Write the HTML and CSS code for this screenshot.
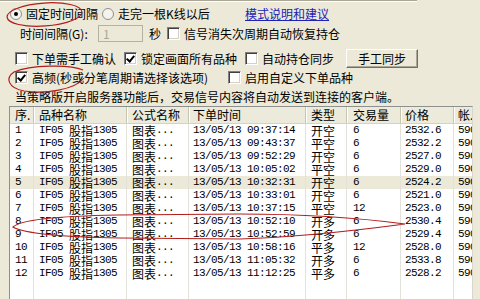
FILE: index.html
```html
<!DOCTYPE html>
<html>
<head>
<meta charset="utf-8">
<link rel="stylesheet" href="styles.css">
</head>
<body>
<div class="toprule"></div>
<div class="row r1">
  <span class="radio on"></span><span class="lbl w72">固定时间间隔</span>
  <span class="radio"></span><span class="lbl w90">走完一根K线以后</span>
  <a class="link">模式说明和建议</a>
</div>
<div class="row r2">
  <span class="lbl w70">时间间隔(G):</span>
  <span class="tbox">1</span>
  <span class="lbl sec">秒</span>
  <span class="cb"></span><span class="lbl">信号消失次周期自动恢复持仓</span>
</div>
<div class="row r3">
  <span class="cb"></span><span class="lbl w84">下单需手工确认</span>
  <span class="cb on g8"></span><span class="lbl w96">锁定画面所有品种</span>
  <span class="cb g8"></span><span class="lbl w72">自动持仓同步</span>
  <span class="btn">手工同步</span>
</div>
<div class="row r4">
  <span class="cb on"></span><span class="lbl w190">高频(秒或分笔周期请选择该选项)</span>
  <span class="cb"></span><span class="lbl">启用自定义下单品种</span>
</div>
<div class="row r5">
  <span class="lbl">当策略版开启服务器功能后，交易信号内容将自动发送到连接的客户端。</span>
</div>
<div class="list">
  <div class="tr th">
    <span>序.</span><span>品种名称</span><span>公式名称</span><span>下单时间</span><span>类型</span><span>交易量</span><span>价格</span><span>帐.</span>
  </div>
  <div class="tr"><span>1</span><span>IF05 <i>股指</i>1305</span><span><i>图表</i>...</span><span>13/05/13 09:37:14</span><span class="k">开空</span><span>6</span><span>2532.6</span><span>590</span></div>
  <div class="tr"><span>2</span><span>IF05 <i>股指</i>1305</span><span><i>图表</i>...</span><span>13/05/13 09:43:37</span><span class="k">平空</span><span>6</span><span>2532.2</span><span>590</span></div>
  <div class="tr"><span>3</span><span>IF05 <i>股指</i>1305</span><span><i>图表</i>...</span><span>13/05/13 09:52:29</span><span class="k">开空</span><span>6</span><span>2527.0</span><span>590</span></div>
  <div class="tr"><span>4</span><span>IF05 <i>股指</i>1305</span><span><i>图表</i>...</span><span>13/05/13 10:05:02</span><span class="k">平空</span><span>6</span><span>2529.0</span><span>590</span></div>
  <div class="tr sel"><span>5</span><span>IF05 <i>股指</i>1305</span><span><i>图表</i>...</span><span>13/05/13 10:32:31</span><span class="k">开空</span><span>6</span><span>2524.2</span><span>590</span></div>
  <div class="tr"><span>6</span><span>IF05 <i>股指</i>1305</span><span><i>图表</i>...</span><span>13/05/13 10:33:01</span><span class="k">开空</span><span>6</span><span>2521.0</span><span>590</span></div>
  <div class="tr"><span>7</span><span>IF05 <i>股指</i>1305</span><span><i>图表</i>...</span><span>13/05/13 10:37:15</span><span class="k">平空</span><span>12</span><span>2523.0</span><span>590</span></div>
  <div class="tr"><span>8</span><span>IF05 <i>股指</i>1305</span><span><i>图表</i>...</span><span>13/05/13 10:52:10</span><span class="k">开多</span><span>6</span><span>2530.4</span><span>590</span></div>
  <div class="tr"><span>9</span><span>IF05 <i>股指</i>1305</span><span><i>图表</i>...</span><span>13/05/13 10:52:59</span><span class="k">开多</span><span>6</span><span>2529.4</span><span>590</span></div>
  <div class="tr"><span>10</span><span>IF05 <i>股指</i>1305</span><span><i>图表</i>...</span><span>13/05/13 10:58:16</span><span class="k">平多</span><span>12</span><span>2528.0</span><span>590</span></div>
  <div class="tr"><span>11</span><span>IF05 <i>股指</i>1305</span><span><i>图表</i>...</span><span>13/05/13 11:05:32</span><span class="k">开多</span><span>6</span><span>2533.8</span><span>590</span></div>
  <div class="tr"><span>12</span><span>IF05 <i>股指</i>1305</span><span><i>图表</i>...</span><span>13/05/13 11:12:25</span><span class="k">平多</span><span>6</span><span>2528.2</span><span>590</span></div>
  <div class="tr"><span></span><span></span><span></span><span></span><span></span><span></span><span></span><span></span></div>
  <div class="tr"><span></span><span></span><span></span><span></span><span></span><span></span><span></span><span></span></div>
</div>
<svg class="marks" width="480" height="299" viewBox="0 0 480 299">
  <ellipse cx="44.5" cy="14.5" rx="37.5" ry="11.5" transform="rotate(-4 44.5 14.5)"/>
  <path d="M83,70 C70,64 30,65 14,72 C5,78 8,88 24,91 C45,94 75,90 84,78"/>
  <path d="M13,227 C20,220 60,216 117,215 L240,214 C300,214 360,218 405,224 C360,230 300,237 240,239 L120,238 C60,237 25,234 13,227 Z"/>
</svg>
</body>
</html>
```
FILE: styles.css
```css
html, body {
  margin: 0;
  padding: 0;
}
body {
  width: 480px;
  height: 299px;
  overflow: hidden;
  position: relative;
  background: #ECE9D8;
  font: 12px/14px "Noto Sans CJK SC", sans-serif;
  color: #000;
}
.toprule {
  width: 417px;
  border-top: 1px solid #ACA899;
  border-bottom: 1px solid #FFFFFF;
}
.row {
  display: flex;
  align-items: center;
  white-space: nowrap;
}
.r1 { height: 23px; padding-left: 10px; }
.r2 { height: 17px; padding-left: 20px; }
.r3 { height: 19px; padding-left: 15px; margin-top: 7px; }
.r4 { height: 19px; padding-left: 15px; }
.r5 { height: 19px; padding-left: 15px; }

.lbl { display: inline-block; }
.w70 { width: 78px; }
.w72 { width: 72px; }
.w84 { width: 84px; }
.w90 { width: 90px; }
.w96 { width: 96px; }
.w190 { width: 196px; }

.radio {
  width: 12px;
  height: 12px;
  box-sizing: border-box;
  border-radius: 50%;
  border: 1px solid #8E8F8F;
  background: #F4F3EE;
  margin-right: 4px;
  position: relative;
}
.radio + .lbl + .radio { margin-left: 4px; }
.radio.on::after {
  content: "";
  position: absolute;
  left: 3px;
  top: 3px;
  width: 4px;
  height: 4px;
  border-radius: 50%;
  background: #000;
}
.link {
  margin-left: 37px;
  color: #2121B5;
  text-decoration: underline;
}
.tbox {
  width: 45px;
  height: 17px;
  box-sizing: border-box;
  border: 1px solid #B5B2A5;
  background: #ECE9D8;
  color: #ACA899;
  padding-left: 4px;
  line-height: 15px;
}
.sec { margin-left: 6px; margin-right: 6px; }
.cb {
  width: 13px;
  height: 13px;
  box-sizing: border-box;
  border: 1px solid;
  border-color: #808080 #FFFFFF #FFFFFF #808080;
  box-shadow: inset 1px 1px 0 #404040, inset -1px -1px 0 #D4D0C8;
  background: #FFFFFF;
  margin-right: 4px;
  position: relative;
  flex: none;
}
.cb.on::after {
  content: "";
  position: absolute;
  left: 3px;
  top: 1px;
  width: 3px;
  height: 6px;
  border: solid #000;
  border-width: 0 2px 2px 0;
  transform: rotate(40deg);
}
.g8 { margin-left: 8px; }
.btn {
  margin-left: 12px;
  width: 72px;
  height: 19px;
  box-sizing: border-box;
  border: 1px solid;
  border-color: #FFFFFF #716F64 #716F64 #FFFFFF;
  box-shadow: inset -1px -1px 0 #ACA899;
  text-align: center;
  line-height: 17px;
}

.list {
  margin-left: 9px;
  width: 464px;
  height: 200px;
  box-sizing: border-box;
  border-left: 1px solid #8E8F8F;
  border-top: 1px solid #8E8F8F;
  border-right: 1px solid #D8D6CC;
  background: #FFFFFF;
  overflow: hidden;
}
.tr {
  display: grid;
  grid-template-columns: 24px 93px 62px 117px 41px 54px 53px 60px;
  height: 13px;
  font: 11px/13px "Liberation Mono", "Noto Sans CJK SC", monospace;
  letter-spacing: -0.6px;
  white-space: nowrap;
}
.tr > span {
  box-sizing: border-box;
  border-right: 1px solid #E2E1DA;
  padding-left: 5px;
  height: 13px;
}
.tr > span:nth-child(4) { padding-left: 4px; }
.tr > span:nth-child(6) { padding-left: 6px; }
.tr > span:nth-child(7) { padding-left: 4px; }
.tr > span:nth-child(8) { padding-left: 4px; }
.tr i, .tr .k {
  font: 12px/13px "Noto Sans CJK SC", sans-serif;
  font-style: normal;
  letter-spacing: 0;
}
.tr i {
  display: inline-block;
  height: 13px;
  vertical-align: top;
}
.tr.sel { background: #ECE9D8; }
.tr.th {
  height: 17px;
  background: #EBEADB;
  border-bottom: 1px solid #D6D2C2;
  box-sizing: border-box;
  font: 12px/16px "Noto Sans CJK SC", sans-serif;
  letter-spacing: 0;
}
.tr.th > span {
  height: 16px;
  border-right: 1px solid #C7C5B2;
  box-shadow: 1px 0 0 #FFFFFF;
}

.marks {
  position: absolute;
  left: 0;
  top: 0;
  pointer-events: none;
  fill: none;
  stroke: #B41C1C;
  stroke-width: 1.2;
}
```
